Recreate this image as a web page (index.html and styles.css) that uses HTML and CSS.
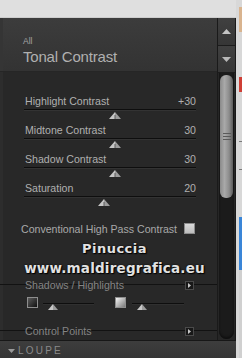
FILE: index.html
```html
<!DOCTYPE html>
<html>
<head>
<meta charset="utf-8">
<link rel="stylesheet" href="styles.css">
</head>
<body>
<div class="left">
  <div class="topband"></div>
  <div class="panel">
    <div class="upper">
      <div class="main">
        <div class="header">
          <div class="crumb">All</div>
          <div class="title">Tonal Contrast</div>
        </div>
        <div class="content">
          <div class="slider">
            <div class="slabel"><span>Highlight Contrast</span><span>+30</span></div>
            <div class="sline"></div>
            <div class="sthumbs"><svg class="thumb" style="margin-left:85px" viewBox="0 0 12 7"><polygon points="6,0 6,7 0,7" fill="#c6c6c6"/><polygon points="6,0 12,7 6,7" fill="#9c9c9c"/><line x1="6" y1="3" x2="6" y2="7" stroke="#5a5a5a" stroke-width="1"/></svg></div>
          </div>
          <div class="slider">
            <div class="slabel"><span>Midtone Contrast</span><span>30</span></div>
            <div class="sline"></div>
            <div class="sthumbs"><svg class="thumb" style="margin-left:85px" viewBox="0 0 12 7"><polygon points="6,0 6,7 0,7" fill="#c6c6c6"/><polygon points="6,0 12,7 6,7" fill="#9c9c9c"/><line x1="6" y1="3" x2="6" y2="7" stroke="#5a5a5a" stroke-width="1"/></svg></div>
          </div>
          <div class="slider">
            <div class="slabel"><span>Shadow Contrast</span><span>30</span></div>
            <div class="sline"></div>
            <div class="sthumbs"><svg class="thumb" style="margin-left:85px" viewBox="0 0 12 7"><polygon points="6,0 6,7 0,7" fill="#c6c6c6"/><polygon points="6,0 12,7 6,7" fill="#9c9c9c"/><line x1="6" y1="3" x2="6" y2="7" stroke="#5a5a5a" stroke-width="1"/></svg></div>
          </div>
          <div class="slider">
            <div class="slabel"><span>Saturation</span><span>20</span></div>
            <div class="sline"></div>
            <div class="sthumbs"><svg class="thumb" style="margin-left:74px" viewBox="0 0 12 7"><polygon points="6,0 6,7 0,7" fill="#c6c6c6"/><polygon points="6,0 12,7 6,7" fill="#9c9c9c"/><line x1="6" y1="3" x2="6" y2="7" stroke="#5a5a5a" stroke-width="1"/></svg></div>
          </div>
          <div class="check-row"><span>Conventional High Pass Contrast</span><span class="checkbox"></span></div>
          <div class="watermark">
            <div class="wm1">Pinuccia</div>
            <div class="wm2">www.maldiregrafica.eu</div>
          </div>
          <div class="section">
            <span class="sec-label">Shadows / Highlights</span>
            <span class="sbtn"><svg viewBox="0 0 7 7"><polygon points="2,1 5,3.5 2,6" fill="#c8c8c8"/></svg></span>
          </div>
          <div class="sh-row">
            <span class="swatch dark"></span>
            <div class="mini first">
              <div class="mini-line"></div>
              <svg class="mini-thumb" viewBox="0 0 10 6"><polygon points="5,0 5,6 0,6" fill="#c6c6c6"/><polygon points="5,0 10,6 5,6" fill="#9c9c9c"/></svg>
            </div>
            <span class="swatch light"></span>
            <div class="mini second">
              <div class="mini-line"></div>
              <svg class="mini-thumb" viewBox="0 0 10 6"><polygon points="5,0 5,6 0,6" fill="#c6c6c6"/><polygon points="5,0 10,6 5,6" fill="#9c9c9c"/></svg>
            </div>
          </div>
          <div class="section cp">
            <span class="sec-label">Control Points</span>
            <span class="sbtn"><svg viewBox="0 0 7 7"><polygon points="2,1 5,3.5 2,6" fill="#c8c8c8"/></svg></span>
          </div>
        </div>
      </div>
      <div class="scroll">
        <div class="sb-btn up"><svg viewBox="0 0 9 5"><polygon points="4.5,0 9,5 0,5" fill="#c4c4c4"/></svg></div>
        <div class="sb-btn down"><svg viewBox="0 0 9 5"><polygon points="0,0 9,0 4.5,5" fill="#b8b8b8"/></svg></div>
        <div class="track">
          <div class="thumb-bar">
            <span class="grip"></span><span class="grip"></span><span class="grip"></span>
          </div>
        </div>
      </div>
    </div>
    <div class="loupe"><svg class="loupe-arrow" viewBox="0 0 7 4"><polygon points="0,0 7,0 3.5,4" fill="#9a9a9a"/></svg>LOUPE</div>
  </div>
</div>
<div class="strip">
  <div class="seg g" style="height:7px"></div>
  <div class="seg orange" style="height:25px"></div>
  <div class="seg g" style="height:45px"></div>
  <div class="seg red" style="height:15px"></div>
  <div class="seg g" style="height:49px"></div>
  <div class="seg tick"></div>
  <div class="seg g" style="height:27px"></div>
  <div class="seg tick"></div>
  <div class="seg g" style="height:47px"></div>
  <div class="seg blue" style="height:53px"></div>
  <div class="seg g rest"></div>
</div>
</body>
</html>
```
FILE: styles.css
```css
* { box-sizing: border-box; }
html, body { margin: 0; padding: 0; }
body {
  width: 242px;
  height: 358px;
  overflow: hidden;
  background: #dcdcdc;
  display: flex;
  font-family: "Liberation Sans", Arial, sans-serif;
}
.left { width: 236px; display: flex; flex-direction: column; }
.topband { height: 18px; background: #dfdfdf; border-bottom: 1px solid #cdcdcd; }
.panel { height: 340px; display: flex; flex-direction: column; }
.upper { height: 322px; display: flex; }
.main {
  width: 217px;
  display: flex;
  flex-direction: column;
  background: #282828;
  box-shadow: inset 3px 0 0 #2d2d2d;
}
.header {
  height: 54px;
  padding: 18px 0 0 23px;
  background: linear-gradient(#3c3c3c, #333333);
  border-bottom: 1px solid #262626;
  box-shadow: inset 3px 0 0 #353535;
}
.crumb { height: 10px; font-size: 8.5px; line-height: 10px; color: #a4a4a4; }
.title { margin-top: 2px; height: 18px; font-size: 15px; line-height: 18px; letter-spacing: -0.2px; color: #b0b0b0; }
.content { flex: 1; padding-top: 22px; }
.slider { margin: 0 21px 0 24px; height: 29px; }
.slabel {
  display: flex;
  justify-content: space-between;
  height: 15px;
  line-height: 15px;
  padding-left: 1px;
  font-size: 10.6px;
  color: #b0b0b0;
}
.sline { height: 1px; background: #0e0e0e; box-shadow: 0 1px 0 #333333; }
.sthumbs { height: 13px; padding-top: 2px; display: flex; }
.thumb { width: 12px; height: 7px; display: block; }
.check-row {
  margin-top: 11px;
  height: 15px;
  display: flex;
  align-items: center;
  padding-left: 21px;
  font-size: 10.6px;
  color: #a8a8a8;
}
.checkbox {
  width: 11px;
  height: 11px;
  margin-left: 7px;
  background: linear-gradient(#dadada, #bcbcbc);
  border: 1px solid #8c8c8c;
}
.watermark {
  height: 39px;
  padding-left: 12px;
  text-align: center;
  font-family: "DejaVu Sans", sans-serif;
  font-weight: bold;
  color: #e2e2e2;
  text-shadow: 0 0 2px #000, 1px 1px 1px #000;
}
.wm1 { margin-top: 4px; line-height: 18px; font-size: 13px; letter-spacing: 0.5px; }
.wm2 { margin-top: 1px; line-height: 18px; font-size: 13.5px; letter-spacing: 0.2px; }
.section {
  position: relative;
  height: 12px;
  display: flex;
  align-items: center;
  padding: 0 23px 0 25px;
}
.section::before {
  content: "";
  position: absolute;
  left: 0;
  right: 0;
  top: 5px;
  height: 1px;
  background: #121212;
}
.sec-label { position: relative; font-size: 10.6px; line-height: 12px; color: #848484; }
.sbtn {
  position: relative;
  margin-left: auto;
  width: 9px;
  height: 9px;
  background: #181818;
  border: 1px solid #4a4a4a;
  display: flex;
}
.sbtn svg { width: 7px; height: 7px; display: block; }
.sh-row { margin-top: 6px; height: 13px; display: flex; padding-left: 27px; }
.swatch { width: 11px; height: 11px; border: 1px solid #8e8e8e; display: block; }
.swatch.dark { background: linear-gradient(135deg, #5c5c5c, #101010); }
.swatch.light { margin-left: 21px; background: linear-gradient(135deg, #f4f4f4, #7a7a7a); }
.mini { padding-top: 6px; }
.mini.first { margin-left: 5px; width: 51px; }
.mini.second { margin-left: 6px; width: 52px; }
.mini-line { height: 1px; background: #0e0e0e; box-shadow: 0 1px 0 #303030; }
.mini-thumb { display: block; width: 10px; height: 6px; margin-left: 5px; }
.section.cp { margin-top: 15px; }
.scroll {
  width: 19px;
  display: flex;
  flex-direction: column;
  background: #262626;
  border-left: 1px solid #1a1a1a;
  border-right: 1px solid #1a1a1a;
}
.sb-btn {
  display: flex;
  align-items: center;
  justify-content: center;
  background: linear-gradient(#404040, #363636);
  border-bottom: 1px solid #1c1c1c;
}
.sb-btn.up { height: 28px; }
.sb-btn.down { height: 27px; }
.sb-btn svg { width: 9px; height: 5px; display: block; }
.track {
  flex: 1;
  margin: 0 1px 1px;
  padding-top: 2px;
  background: #1b1b1b;
  border-radius: 0 0 8px 8px;
  box-shadow: inset 0 -2px 2px #101010;
}
.thumb-bar {
  height: 123px;
  margin: 0 1px;
  border-radius: 6px;
  background: linear-gradient(to right, #8a8a8a, #a9a9a9 35%, #8c8c8c 70%, #5c5c5c);
  display: flex;
  flex-direction: column;
  align-items: center;
  justify-content: center;
  gap: 2px;
}
.grip { width: 8px; height: 1px; background: #5a5a5a; display: block; }
.loupe {
  height: 18px;
  border-top: 1px solid #171717;
  background: linear-gradient(#3d3d3d, #353535);
  display: flex;
  align-items: center;
  padding: 2px 0 0 8px;
  font-size: 10px;
  letter-spacing: 2.2px;
  color: #8a8a8a;
}
.loupe-arrow { width: 7px; height: 4px; margin-right: 3px; display: block; }
.strip {
  width: 6px;
  height: 358px;
  display: flex;
  flex-direction: column;
  background: #d8d8d8;
}
.seg { margin-left: 3px; }
.seg.g { background: #d8d8d8; }
.seg.orange { background: #d9b48f; }
.seg.red { background: #cf3f35; }
.seg.tick { height: 1px; background: #7a7a7a; }
.seg.blue { background: #3a86d8; }
.seg.rest { flex: 1; background: #d0d0d0; }
```
